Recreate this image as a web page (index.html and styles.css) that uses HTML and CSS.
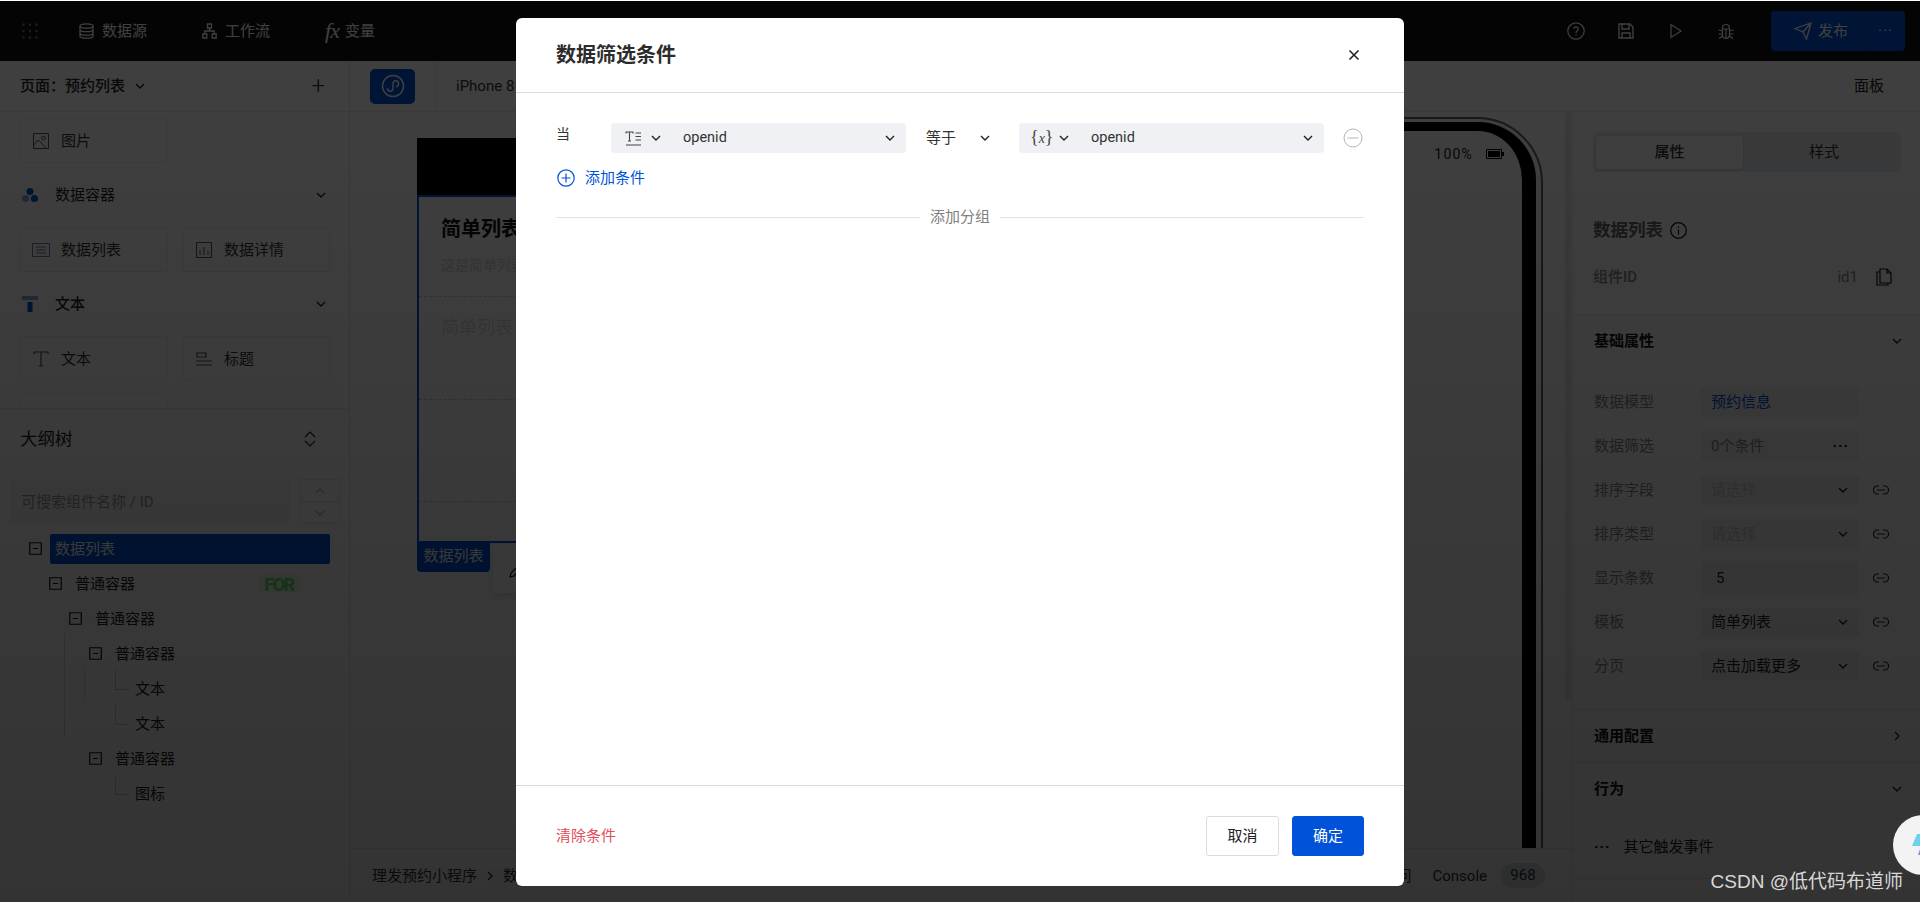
FILE: index.html
```html
<!DOCTYPE html>
<html lang="en">
<head>
    <meta charset="UTF-8">
    <meta name="viewport" content="width=device-width, initial-scale=1.0">
    <title>数据筛选条件</title>
    <link rel="stylesheet" href="styles.css">
</head>
<body>
    <svg class="sprite">
        <symbol id="chev" viewBox="0 0 12 12"><path d="M2 4l4 4 4-4" fill="none" stroke="currentColor" stroke-width="1.4"/></symbol>
        <symbol id="chev-right" viewBox="0 0 12 12"><path d="M4 2l4 4-4 4" fill="none" stroke="currentColor" stroke-width="1.2"/></symbol>
        <symbol id="link" viewBox="0 0 16 10"><path d="M6 1H4.5a4 4 0 0 0 0 8H6M10 1h1.500a4 4 0 0 1 0 8H10M4 5h8" fill="none" stroke="currentColor" stroke-width="1.2"/></symbol>
        <symbol id="minus-box" viewBox="0 0 13 13"><path d="M.75.75h11.5v11.5H.75zM4 6.5h5" fill="none" stroke="currentColor" stroke-width="1.2"/></symbol>
    </svg>

    <div class="app">
        <header class="topbar">
            <svg class="grid-icon" width="16" height="16" viewBox="0 0 16 16" fill="#777">
                <circle cx="1.5" cy="1.5" r="1.2"/><circle cx="8" cy="1.5" r="1.2"/><circle cx="14.5" cy="1.5" r="1.2"/>
                <circle cx="1.5" cy="8" r="1.2"/><circle cx="8" cy="8" r="1.2"/><circle cx="14.5" cy="8" r="1.2"/>
                <circle cx="1.5" cy="14.5" r="1.2"/><circle cx="8" cy="14.5" r="1.2"/><circle cx="14.5" cy="14.5" r="1.2"/>
            </svg>
            <nav class="top-nav">
                <a class="top-link">
                    <svg width="15" height="16" viewBox="0 0 15 16" fill="none" stroke="currentColor" stroke-width="1.3"><ellipse cx="7.5" cy="3" rx="6.5" ry="2.2"/><path d="M1 3v10c0 1.2 3 2.2 6.5 2.2S14 14.2 14 13V3M1 6.500c0 1.2 3 2.2 6.5 2.2S14 7.7 14 6.500M1 10c0 1.2 3 2.2 6.5 2.2S14 11.2 14 10"/></svg>
                    数据源
                </a>
                <a class="top-link">
                    <svg width="15" height="16" viewBox="0 0 15 16" fill="none" stroke="currentColor" stroke-width="1.3"><path d="M5.5 1h4v4h-4zM.8 11h4v4h-4zM10.2 11h4v4h-4zM7.5 5v3M2.8 11V8h9.4v3"/></svg>
                    工作流
                </a>
                <a class="top-link">
                    <span class="fx-icon">fx</span>
                    变量
                </a>
            </nav>
            <div class="top-actions">
                <svg height="18" viewBox="0 0 18 18" fill="none" stroke="currentColor" stroke-width="1.2"><circle cx="9" cy="9" r="8.2"/><path d="M6.800 7a2.2 2.2 0 1 1 3.400 1.900c-.8.5-1.200 1-1.200 2"/><path d="M9 12.500v1.200"/></svg>
                <svg height="16" viewBox="0 0 16 16" fill="none" stroke="currentColor" stroke-width="1.4"><path d="M1 1h11l3 3v11H1zM4 1v5h7V1M4 15v-5h8v5"/></svg>
                <svg height="16" viewBox="0 0 12 16" fill="none" stroke="currentColor" stroke-width="1.2"><path d="M1 1.500v13L11 8z"/></svg>
                <svg height="17" viewBox="0 0 17 17" fill="none" stroke="currentColor" stroke-width="1.2"><path d="M5 5a3.500 3.500 0 0 1 7 0v1H5zM5 6h7v6a3.500 3.500 0 0 1-7 0zM8.500 6v9M1 7l4 1M16 7l-4 1M1 11h4M16 11h-4M1.500 15.500L5 13M15.500 15.500L12 13"/></svg>
                <div class="publish">
                    <span class="publish-main">
                        <svg width="18" height="18" viewBox="0 0 18 18" fill="none" stroke="currentColor" stroke-width="1.3"><path d="M1 6.500L17 1l-4.500 16-3.500-7zM9 10l8-9"/></svg>
                        发布
                    </span>
                    <span class="publish-more">···</span>
                </div>
            </div>
        </header>

        <div class="toolbar">
            <div class="page-picker">
                <span class="page-name">页面：预约列表</span>
                <svg class="chev"><use href="#chev"/></svg>
                <span class="page-add">+</span>
            </div>
            <div class="mp-tab">
                <span class="mp-button">
                    <svg width="24" height="24" viewBox="0 0 24 24" fill="none" stroke="currentColor" stroke-width="1.5"><circle cx="12" cy="12" r="10.500"/><path d="M6.500 14a2.800 2.800 0 1 0 5.500 0v-4a2.800 2.800 0 1 1 5.500 0c0 1.500-1 2.500-2.500 2.800"/></svg>
                </span>
            </div>
            <div class="device-name">iPhone 8</div>
            <div class="panel-toggle">面板</div>
        </div>

        <div class="workspace">
            <aside class="left-panel">
                <div class="widgets">
                    <div class="widget-row">
                        <div class="widget">
                            <svg width="16" height="16" viewBox="0 0 16 16" fill="none" stroke="#555" stroke-width="1"><path d="M.5.500h15v15H.5zM.5 12l5-5 8 8.500"/><circle cx="10.500" cy="5" r="1.800"/></svg>
                            图片
                        </div>
                    </div>
                    <div class="widget-title">
                        <svg width="16" height="16" viewBox="0 0 18 18"><circle cx="9" cy="5" r="4" fill="#0052d9"/><circle cx="4" cy="13" r="4" fill="#8fa8d6"/><circle cx="14" cy="13" r="4" fill="#0052d9"/></svg>
                        <span>数据容器</span>
                        <svg class="chev"><use href="#chev"/></svg>
                    </div>
                    <div class="widget-row">
                        <div class="widget">
                            <svg class="wide-icon" width="18" height="14" viewBox="0 0 18 14" fill="none" stroke="#6f80a0" stroke-width="1"><path d="M.5.500h17v13H.5zM4 4h10M4 7h10M4 10h10"/></svg>
                            数据列表
                        </div>
                        <div class="widget">
                            <svg width="16" height="16" viewBox="0 0 16 16" fill="none" stroke="#555" stroke-width="1"><path d="M.5.500h15v15H.5zM4 8v5M8 5v8M12 9v4"/></svg>
                            数据详情
                        </div>
                    </div>
                    <div class="widget-title">
                        <svg width="16" height="16" viewBox="0 0 16 16"><path d="M0 0h16v4H0z" fill="#8fa8d6"/><path d="M5.500 6h5v10h-5z" fill="#0052d9"/></svg>
                        <span class="strong">文本</span>
                        <svg class="chev"><use href="#chev"/></svg>
                    </div>
                    <div class="widget-row">
                        <div class="widget">
                            <svg width="16" height="16" viewBox="0 0 16 16" fill="none" stroke="#555" stroke-width="1.2"><path d="M1 3V1h14v2M8 1v14M5.500 15h5"/></svg>
                            文本
                        </div>
                        <div class="widget">
                            <svg width="16" height="14" viewBox="0 0 16 14" fill="none" stroke="#555" stroke-width="1.2"><path d="M1 5V1h9v4zM0 9h16M0 13h16"/></svg>
                            标题
                        </div>
                    </div>
                    <div class="widget-row">
                        <div class="widget">
                            <svg width="16" height="16" viewBox="0 0 16 16" fill="none" stroke="#555" stroke-width="1"><path d="M.5.500h15v15H.5z"/></svg>
                            富文本显示
                        </div>
                    </div>
                </div>

                <div class="outline">
                    <div class="outline-head">
                        <span>大纲树</span>
                        <svg width="12" height="16" viewBox="0 0 12 16" fill="none" stroke="currentColor" stroke-width="1.2"><path d="M1 6l5-5 5 5M1 10l5 5 5-5"/></svg>
                    </div>
                    <div class="outline-search">
                        <div class="search-input">可搜索组件名称 / ID</div>
                        <div class="search-steps">
                            <span><svg class="chev flip"><use href="#chev"/></svg></span>
                            <span><svg class="chev"><use href="#chev"/></svg></span>
                        </div>
                    </div>
                    <div class="tree">
                        <i class="guide guide-a"></i>
                        <i class="guide guide-b"></i>
                        <div class="tree-row lv0 selected"><svg class="expander"><use href="#minus-box"/></svg><span class="tree-label">数据列表</span></div>
                        <div class="tree-row lv1"><svg class="expander"><use href="#minus-box"/></svg><span class="tree-label">普通容器</span><span class="for-badge">FOR</span></div>
                        <div class="tree-row lv2"><svg class="expander"><use href="#minus-box"/></svg><span class="tree-label">普通容器</span></div>
                        <div class="tree-row lv3"><svg class="expander"><use href="#minus-box"/></svg><span class="tree-label">普通容器</span></div>
                        <div class="tree-row lv4 leaf"><span class="tree-label">文本</span></div>
                        <div class="tree-row lv4 leaf"><span class="tree-label">文本</span></div>
                        <div class="tree-row lv3"><svg class="expander"><use href="#minus-box"/></svg><span class="tree-label">普通容器</span></div>
                        <div class="tree-row lv4 leaf"><span class="tree-label">图标</span></div>
                    </div>
                </div>
            </aside>

            <main class="center">
                <div class="canvas">
                    <div class="list-preview">
                        <div class="preview-nav"></div>
                        <div class="preview-box">
                            <div class="preview-head">
                                <div class="preview-title">简单列表</div>
                                <div class="preview-desc">这是简单列表描述</div>
                            </div>
                            <div class="preview-item">简单列表</div>
                            <div class="preview-item tall"></div>
                            <div class="preview-item short"></div>
                        </div>
                        <div class="preview-foot">
                            <div class="preview-tag">数据列表</div>
                            <div class="preview-tools">
                                <svg width="16" height="16" viewBox="0 0 16 16" fill="none" stroke="#111" stroke-width="1.2"><path d="M1 15l1-4L11 2l3 3-9 9z"/></svg>
                            </div>
                        </div>
                    </div>
                    <div class="phone">
                        <div class="phone-bezel">
                            <div class="status-bar">
                                <span>100%</span>
                                <svg width="18" height="10" viewBox="0 0 18 10"><path d="M.5.500h15v9H.5z" fill="none" stroke="#000"/><path d="M2 2h12v6H2zM16 3h2v4h-2z" fill="#000"/></svg>
                            </div>
                        </div>
                    </div>
                    <div class="canvas-scroll"></div>
                </div>
                <div class="bottom-bar">
                    <span>理发预约小程序</span>
                    <svg class="chev-right"><use href="#chev-right"/></svg>
                    <span>数据列表</span>
                    <div class="console">
                        <span>访问</span>
                        <span class="console-name">Console</span>
                        <span class="console-count">968</span>
                    </div>
                </div>
            </main>

            <aside class="right-panel">
                <div class="comp-info">
                    <div class="tabs">
                        <span class="tab active">属性</span>
                        <span class="tab">样式</span>
                    </div>
                    <div class="comp-title">
                        数据列表
                        <svg width="17" height="17" viewBox="0 0 17 17" fill="none" stroke="#111" stroke-width="1.2"><circle cx="8.500" cy="8.500" r="7.800"/><path d="M8.500 7.500v5M8.500 4.500v1.500"/></svg>
                    </div>
                    <div class="comp-id">
                        <span class="comp-id-label">组件ID</span>
                        <span class="comp-id-value">id1</span>
                        <svg width="16" height="18" viewBox="0 0 16 18" fill="none" stroke="currentColor" stroke-width="1.2"><path d="M4 1h7l4 4v10H4zM11 1v4h4M4 4H1v13h11v-2"/></svg>
                    </div>
                </div>

                <section class="prop-group">
                    <div class="group-head">基础属性<svg class="chev"><use href="#chev"/></svg></div>
                    <div class="prop-row"><span class="prop-label">数据模型</span><div class="prop-box link-value">预约信息</div></div>
                    <div class="prop-row"><span class="prop-label">数据筛选</span><div class="prop-box"><span class="muted">0个条件</span><span class="dots">···</span></div></div>
                    <div class="prop-row"><span class="prop-label">排序字段</span><div class="prop-box"><span class="faint">请选择</span><svg class="chev"><use href="#chev"/></svg></div><svg class="link-icon"><use href="#link"/></svg></div>
                    <div class="prop-row"><span class="prop-label">排序类型</span><div class="prop-box"><span class="faint">请选择</span><svg class="chev"><use href="#chev"/></svg></div><svg class="link-icon"><use href="#link"/></svg></div>
                    <div class="prop-row"><span class="prop-label">显示条数</span><div class="prop-box number">5</div><svg class="link-icon"><use href="#link"/></svg></div>
                    <div class="prop-row"><span class="prop-label">模板</span><div class="prop-box"><span>简单列表</span><svg class="chev"><use href="#chev"/></svg></div><svg class="link-icon"><use href="#link"/></svg></div>
                    <div class="prop-row"><span class="prop-label">分页</span><div class="prop-box"><span>点击加载更多</span><svg class="chev"><use href="#chev"/></svg></div><svg class="link-icon"><use href="#link"/></svg></div>
                </section>

                <section class="prop-group collapsed">
                    <div class="group-head">通用配置<svg class="chev-right"><use href="#chev-right"/></svg></div>
                </section>

                <section class="prop-group behavior">
                    <div class="group-head">行为<svg class="chev"><use href="#chev"/></svg></div>
                    <div class="event-row"><span class="event-dots">···</span>其它触发事件</div>
                </section>
            </aside>
        </div>
    </div>

    <div class="mask">
        <div class="modal">
            <div class="modal-head">
                <h2>数据筛选条件</h2>
                <svg width="12" height="12" viewBox="0 0 12 12" fill="none" stroke="#222" stroke-width="1.6"><path d="M1.500 1.500l9 9M10.500 1.500l-9 9"/></svg>
            </div>
            <div class="modal-body">
                <div class="filter-row">
                    <span class="filter-when">当</span>
                    <div class="filter-select field-select">
                        <svg class="type-icon" width="16" height="15" viewBox="0 0 16 15" fill="none" stroke="#444" stroke-width="1.1"><path d="M1 2.500V1h7v1.500M4.500 1v9M3 10h3M10.500 2H16M10.500 5.500H16M10.500 9H16M1 14h15"/></svg>
                        <svg class="chev"><use href="#chev"/></svg>
                        <span class="filter-value">openid</span>
                        <svg class="chev"><use href="#chev"/></svg>
                    </div>
                    <div class="filter-op">
                        <span>等于</span>
                        <svg class="chev"><use href="#chev"/></svg>
                    </div>
                    <div class="filter-select value-select">
                        <span class="var-icon">{<em>x</em>}</span>
                        <svg class="chev"><use href="#chev"/></svg>
                        <span class="filter-value">openid</span>
                        <svg class="chev"><use href="#chev"/></svg>
                    </div>
                    <svg class="filter-remove" width="20" height="20" viewBox="0 0 20 20" fill="none" stroke="#b5b5b5" stroke-width="1"><circle cx="10" cy="10" r="9"/><path d="M4.500 10h11"/></svg>
                </div>
                <a class="add-condition">
                    <svg width="18" height="18" viewBox="0 0 18 18" fill="none" stroke="#0052d9" stroke-width="1.2"><circle cx="9" cy="9" r="8.200"/><path d="M4.500 9h9M9 4.500v9"/></svg>
                    添加条件
                </a>
                <div class="add-group"><span>添加分组</span></div>
            </div>
            <div class="modal-foot">
                <a class="clear-link">清除条件</a>
                <div class="foot-buttons">
                    <button class="btn">取消</button>
                    <button class="btn btn-primary">确定</button>
                </div>
            </div>
        </div>
    </div>

    <div class="float-helper">
        <svg width="20" height="24" viewBox="0 0 20 24"><path d="M5 1h13l-4 12H0z" fill="#6fd0ee"/><path d="M10 10h6l-4 12H6z" fill="#7a8cf5"/></svg>
    </div>
    <div class="watermark">CSDN @低代码布道师</div>
</body>
</html>
```

FILE: styles.css
```css
* {
    margin: 0;
    padding: 0;
    box-sizing: border-box;
}

html, body {
    height: 902px;
    overflow: hidden;
}

body {
    font-family: Roboto, "Noto Sans CJK SC", sans-serif;
    font-size: 15px;
    line-height: 20px;
    color: #222;
    background: #fff;
    position: relative;
    padding-top: 1px;
}

.sprite {
    display: none;
}

.app {
    height: 901px;
    display: flex;
    flex-direction: column;
}

.chev {
    width: 12px;
    height: 12px;
    flex-shrink: 0;
    color: #222;
}

.chev.flip {
    transform: rotate(180deg);
}

.chev-right {
    width: 12px;
    height: 12px;
    flex-shrink: 0;
    color: #222;
}

/* top bar */
.topbar {
    height: 60px;
    background: #111;
    color: #fff;
    display: flex;
    align-items: center;
    padding: 0 15px 0 22px;
    flex-shrink: 0;
}

.top-nav {
    display: flex;
    align-items: center;
    gap: 55px;
    margin-left: 41px;
}

.top-link {
    display: flex;
    align-items: center;
    gap: 8px;
}

.fx-icon {
    font-family: "Liberation Serif", serif;
    font-style: italic;
    font-size: 22px;
    letter-spacing: -1px;
    margin-right: -2px;
}

.top-actions {
    margin-left: auto;
    display: flex;
    align-items: center;
    gap: 32px;
}

.top-actions > svg {
    width: 18px;
}

.publish {
    width: 134px;
    height: 40px;
    margin-left: 4px;
    background: #0052d9;
    border-radius: 4px;
    display: flex;
    align-items: center;
}

.publish-main {
    width: 95px;
    height: 40px;
    padding-left: 23px;
    display: flex;
    align-items: center;
    gap: 6px;
    border-right: 1px solid #0a47ad;
}

.publish-more {
    flex: 1;
    text-align: center;
    letter-spacing: 1px;
}

/* toolbar */
.toolbar {
    height: 51px;
    display: flex;
    align-items: center;
    border-bottom: 1px solid #e7e7e7;
    flex-shrink: 0;
    background: #fff;
}

.page-picker {
    width: 350px;
    height: 50px;
    padding: 0 24px 0 20px;
    border-right: 1px solid #e7e7e7;
    display: flex;
    align-items: center;
    gap: 9px;
}

.page-name {
    font-weight: 500;
}

.page-add {
    margin-left: auto;
    font-size: 24px;
    line-height: 24px;
    font-weight: 300;
    color: #333;
}

.mp-tab {
    width: 86px;
    height: 50px;
    padding-left: 20px;
    border-right: 1px solid #e7e7e7;
    display: flex;
    align-items: center;
}

.mp-button {
    width: 45px;
    height: 35px;
    background: #0052d9;
    border-radius: 5px;
    color: #fff;
    display: flex;
    align-items: center;
    justify-content: center;
}

.device-name {
    margin-left: 20px;
    color: #333;
}

.panel-toggle {
    margin-left: auto;
    margin-right: 36px;
}

/* workspace */
.workspace {
    flex: 1;
    display: flex;
    min-height: 0;
}

.left-panel {
    width: 350px;
    border-right: 1px solid #e7e7e7;
    display: flex;
    flex-direction: column;
    flex-shrink: 0;
}

.widgets {
    height: 297px;
    padding: 6px 19px 0 20px;
    overflow: hidden;
    border-bottom: 1px solid #e7e7e7;
    flex-shrink: 0;
}

.widget-row {
    display: grid;
    grid-template-columns: 148px 147px;
    gap: 15px;
    margin-bottom: 12px;
}

.widget {
    height: 45px;
    border: 1px solid #eee;
    border-radius: 3px;
    padding-left: 12px;
    display: flex;
    align-items: center;
    gap: 12px;
    color: #333;
}

.wide-icon {
    margin: 0 -1px;
}

.widget-title {
    height: 64px;
    margin-top: -12px;
    display: flex;
    align-items: center;
    gap: 17px;
    padding: 0 3px 0 2px;
}

.widget-title .chev {
    margin-left: auto;
}

.widget-title .strong {
    font-weight: 500;
}

.outline {
    flex: 1;
    min-height: 0;
}

.outline-head {
    height: 70px;
    padding: 0 33px 10px 20px;
    display: flex;
    justify-content: space-between;
    align-items: center;
    font-size: 17.5px;
}

.outline-search {
    padding-left: 10px;
    display: flex;
    gap: 10px;
}

.search-input {
    width: 280px;
    height: 45px;
    background: #f5f5f5;
    border-radius: 4px;
    padding-left: 11px;
    display: flex;
    align-items: center;
    color: #999;
}

.search-steps {
    width: 40px;
    height: 45px;
    border: 1px solid #e7e7e7;
    display: flex;
    flex-direction: column;
}

.search-steps span {
    flex: 1;
    display: flex;
    align-items: center;
    justify-content: center;
}

.search-steps span + span {
    border-top: 1px solid #e7e7e7;
}

.search-steps .chev {
    color: #bbb;
}

.tree {
    position: relative;
    padding-top: 7px;
}

.tree-row {
    height: 35px;
    display: flex;
    align-items: center;
    gap: 8px;
    padding-right: 19px;
    position: relative;
}

.lv0 { padding-left: 29px; }
.lv1 { padding-left: 49px; }
.lv2 { padding-left: 69px; }
.lv3 { padding-left: 89px; }
.lv4 { padding-left: 130px; }

.expander {
    width: 13px;
    height: 13px;
    color: #111;
    flex-shrink: 0;
}

.tree-label {
    padding-left: 5px;
    line-height: 30px;
    flex: 1;
    color: #222;
}

.selected .tree-label {
    background: #0052d9;
    color: #fff;
    border-radius: 2px;
}

.for-badge {
    width: 42px;
    height: 18px;
    margin-right: 30px;
    background: #f0f7f0;
    text-align: center;
    font-weight: 700;
    font-size: 18px;
    line-height: 19px;
    letter-spacing: -1.5px;
    color: #5fe65f;
}

.leaf::before {
    content: "";
    position: absolute;
    left: 115px;
    top: -1px;
    width: 13px;
    height: 19px;
    border-left: 1px solid #ccc;
    border-bottom: 1px solid #ccc;
}

.guide {
    position: absolute;
    width: 1px;
    background: #ddd;
}

.guide-a {
    left: 64px;
    top: 108px;
    height: 104px;
}

.guide-b {
    left: 84px;
    top: 142px;
    height: 35px;
}

/* canvas */
.center {
    flex: 1;
    min-width: 0;
    display: flex;
    flex-direction: column;
}

.canvas {
    flex: 1;
    min-height: 0;
    overflow: hidden;
    display: flex;
    align-items: flex-start;
    padding: 5px 0 0 67px;
    position: relative;
}

.list-preview {
    width: 400px;
    margin-top: 21px;
    flex-shrink: 0;
}

.preview-nav {
    height: 57px;
    background: #000;
}

.preview-box {
    height: 348px;
    border: 2px solid #0052d9;
    background: #fff;
}

.preview-head {
    height: 100px;
    padding: 18px 22px 0;
    border-bottom: 1px dashed #ccc;
}

.preview-title {
    font-size: 20px;
    font-weight: 700;
    line-height: 28px;
    color: #111;
}

.preview-desc {
    margin-top: 12px;
    font-size: 14px;
    color: #d8d8d8;
}

.preview-item {
    height: 103px;
    padding: 18px 22px 0;
    border-bottom: 1px dashed #ccc;
    font-size: 18px;
    line-height: 26px;
    color: #ddd;
}

.preview-item.tall {
    height: 102px;
}

.preview-item.short {
    border: 0;
}

.preview-foot {
    display: flex;
    align-items: flex-start;
    gap: 3px;
}

.preview-tag {
    width: 73px;
    height: 29px;
    background: #0052d9;
    color: #fff;
    border-radius: 0 0 4px 4px;
    text-align: center;
    line-height: 27px;
}

.preview-tools {
    width: 80px;
    height: 48px;
    margin-top: 2px;
    background: #fff;
    border-radius: 2px;
    box-shadow: 0 2px 8px rgba(0, 0, 0, .15);
    padding: 17px 0 0 16px;
}

.phone {
    width: 726px;
    height: 900px;
    flex-shrink: 0;
    border: 2px solid #667;
    border-radius: 66px;
    padding: 3px 5px;
}

.phone-bezel {
    height: 100%;
    border-style: solid;
    border-color: #000;
    border-width: 9px 14px 14px;
    border-radius: 58px;
}

.status-bar {
    display: flex;
    justify-content: flex-end;
    align-items: center;
    gap: 13px;
    padding: 13px 18px 0 0;
    font-size: 14px;
    letter-spacing: 1.2px;
    color: #222;
}

.canvas-scroll {
    position: absolute;
    top: 1px;
    right: 1px;
    width: 6px;
    height: 587px;
    background: #e8e8e8;
    border-radius: 0 0 3px 3px;
}

.bottom-bar {
    height: 54px;
    border-top: 1px solid #e7e7e7;
    padding: 0 27px 0 22px;
    display: flex;
    align-items: center;
    gap: 7px;
    color: #333;
    flex-shrink: 0;
    background: #fff;
}

.console {
    margin-left: auto;
    display: flex;
    align-items: center;
}

.console-name {
    margin-left: 21px;
}

.console-count {
    margin-left: 14px;
    width: 44px;
    height: 25px;
    border-radius: 13px;
    background: #dfe3ea;
    text-align: center;
    line-height: 25px;
}

/* right panel */
.right-panel {
    width: 348px;
    flex-shrink: 0;
    border-left: 1px solid #e7e7e7;
}

.comp-info {
    height: 203px;
    padding: 20px 19px 0 20px;
}

.tabs {
    height: 40px;
    background: #e9ecf0;
    border-radius: 6px;
    padding: 4px 0 3px 3px;
    display: grid;
    grid-template-columns: 147px 1fr;
}

.tab {
    text-align: center;
    line-height: 32px;
    border-radius: 4px;
    color: #333;
}

.tab + .tab {
    padding-left: 4px;
}

.tab.active {
    background: #fff;
    box-shadow: 0 1px 3px rgba(0, 0, 0, .15);
    font-weight: 500;
}

.comp-title {
    margin-top: 45px;
    display: flex;
    align-items: center;
    gap: 7px;
    font-size: 17.5px;
    font-weight: 700;
    line-height: 26px;
    color: #666;
}

.comp-id {
    margin-top: 24px;
    display: flex;
    align-items: center;
    color: #888;
    padding-right: 9px;
}

.comp-id-label {
    font-weight: 500;
}

.comp-id-value {
    margin-left: auto;
    margin-right: 18px;
}

.comp-id svg {
    color: #111;
}

.prop-group {
    border-top: 1px solid #e7e7e7;
    padding: 0 17px 0 21px;
}

.prop-group:not(.collapsed):not(.behavior) {
    padding-bottom: 21px;
}

.group-head {
    height: 50px;
    display: flex;
    justify-content: space-between;
    align-items: center;
    font-weight: 700;
    color: #111;
    margin-bottom: 14px;
}

.prop-row {
    height: 44px;
    display: grid;
    grid-template-columns: 107px 158px 30px;
    align-items: center;
}

.prop-label {
    color: #888;
}

.prop-box {
    height: 30px;
    background: #f3f3f3;
    border-radius: 3px;
    padding: 0 10px;
    display: flex;
    align-items: center;
    justify-content: space-between;
}

.prop-box.number {
    height: 35px;
    padding-left: 15px;
}

.link-value {
    color: #0052d9;
}

.muted {
    color: #888;
}

.faint {
    color: #ccc;
}

.dots {
    color: #111;
    letter-spacing: 1px;
    font-weight: 700;
}

.link-icon {
    width: 16px;
    height: 10px;
    margin-left: 14px;
    color: #222;
}

.collapsed .group-head {
    height: 52px;
    margin: 0;
}

.behavior {
    height: 117px;
    border-bottom: 1px solid #e7e7e7;
}

.behavior .group-head {
    height: 52px;
    margin-bottom: 10px;
}

.event-row {
    display: flex;
    align-items: center;
    gap: 13px;
    line-height: 44px;
    color: #222;
}

.event-dots {
    letter-spacing: 1px;
    font-weight: 700;
    color: #111;
}

/* modal */
.mask {
    position: absolute;
    left: 0;
    right: 0;
    top: 1px;
    bottom: 0;
    background: linear-gradient(rgba(0, 0, 0, .75), rgba(0, 0, 0, .8));
    padding-top: 17px;
    display: flex;
    justify-content: center;
    align-items: flex-start;
}

.modal {
    width: 888px;
    height: 868px;
    background: #fff;
    border-radius: 6px;
    display: flex;
    flex-direction: column;
}

.modal-head {
    height: 75px;
    padding: 0 44px 0 40px;
    border-bottom: 1px solid #d4dbe2;
    display: flex;
    justify-content: space-between;
    align-items: center;
    flex-shrink: 0;
}

.modal-head h2 {
    font-size: 20px;
    font-weight: 700;
    line-height: 28px;
    color: #2c2c2c;
}

.modal-body {
    flex: 1;
    padding: 30px 40px 0;
}

.filter-row {
    display: flex;
    align-items: center;
}

.filter-when {
    width: 55px;
    align-self: flex-start;
    font-size: 14px;
    line-height: 22px;
    color: #333;
}

.filter-select {
    height: 30px;
    background: #f0f1f4;
    border-radius: 4px;
    display: flex;
    align-items: center;
    padding-right: 10px;
}

.field-select {
    width: 295px;
    padding-left: 14px;
}

.value-select {
    width: 305px;
    padding-left: 11px;
}

.type-icon + .chev {
    margin-left: 9px;
}

.filter-value {
    flex: 1;
    margin-left: 21px;
    color: #333;
    font-size: 14.5px;
}

.var-icon {
    width: 22px;
    font-family: "Liberation Serif", serif;
    font-size: 18px;
    color: #444;
    white-space: nowrap;
}

.var-icon em {
    font-size: 14px;
}

.var-icon + .chev {
    margin-left: 6px;
}

.filter-op {
    width: 93px;
    margin-left: 20px;
    display: flex;
    align-items: center;
    color: #333;
}

.filter-op .chev {
    margin-left: 23px;
}

.filter-remove {
    margin-left: 19px;
}

.add-condition {
    margin-top: 14px;
    height: 22px;
    display: flex;
    align-items: center;
    gap: 10px;
    color: #0052d9;
    padding-left: 1px;
}

.add-group {
    margin-top: 18px;
    height: 20px;
    display: flex;
    align-items: center;
    gap: 10px;
    color: #808080;
}

.add-group::before,
.add-group::after {
    content: "";
    flex: 1;
    height: 1px;
    background: #e0e3e8;
}

.modal-foot {
    height: 101px;
    border-top: 1px solid #d9dbe3;
    padding: 0 40px;
    display: flex;
    justify-content: space-between;
    align-items: center;
    flex-shrink: 0;
}

.clear-link {
    color: #e34d59;
}

.foot-buttons {
    display: flex;
    gap: 13px;
}

.btn {
    width: 73px;
    height: 40px;
    border: 1px solid #d9dbe3;
    border-radius: 3px;
    background: #fff;
    color: #222;
    font-family: inherit;
    font-size: 15px;
    line-height: 20px;
}

.btn-primary {
    width: 72px;
    background: #0052d9;
    border-color: #0052d9;
    color: #fff;
}

.float-helper {
    position: absolute;
    left: 1893px;
    top: 815px;
    width: 60px;
    height: 60px;
    border-radius: 50%;
    background: #f3f3f3;
    padding: 18px 0 0 19px;
}

.watermark {
    position: absolute;
    right: 17px;
    top: 869px;
    font-family: "Liberation Sans", "Noto Sans CJK SC", sans-serif;
    font-size: 19px;
    line-height: 26px;
    color: #d8d8d8;
}
```
